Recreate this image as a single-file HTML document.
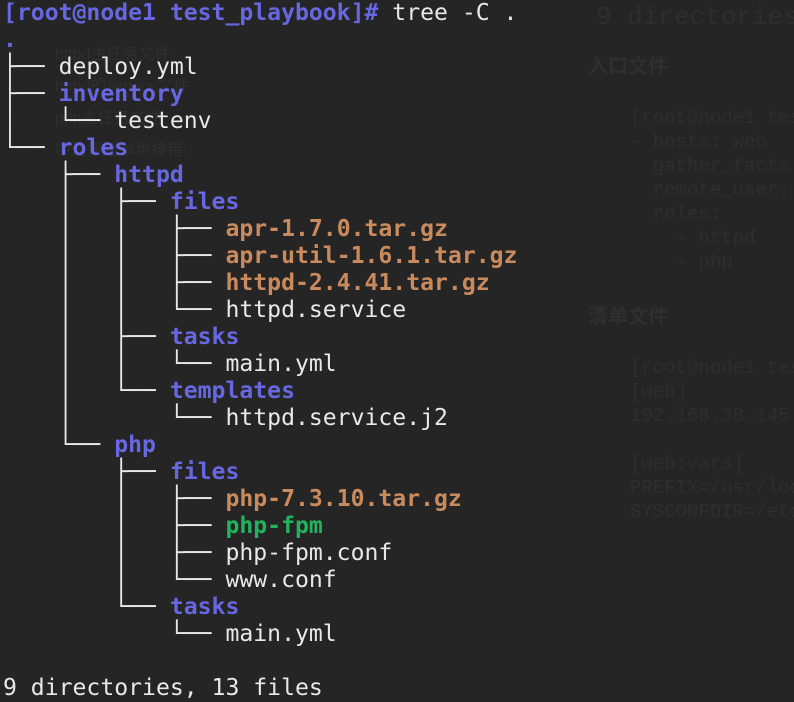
<!DOCTYPE html>
<html><head><meta charset="utf-8"><style>
html,body{margin:0;padding:0;background:#252525;width:794px;height:701px;overflow:hidden}
pre{position:absolute;left:3px;top:0;margin:0;font-family:"DejaVu Sans Mono","Liberation Mono",monospace;font-size:23.1px;line-height:27px;color:#e8e8e8}
.b{color:#6767e2;font-weight:bold}.o{color:#c98a5d;font-weight:bold}.g{color:#22b35c;font-weight:bold}
.gh{position:absolute;color:#2e2e2e;font-family:"Liberation Mono",monospace;font-size:19px;line-height:24px;white-space:pre}
.gc{position:absolute;color:#2f2f2f;font-family:"Liberation Sans","Noto Sans CJK SC",sans-serif;font-size:16px}
</style></head><body>
<div class="gh" style="left:596px;top:2px;font-size:26px;line-height:30px">9 directories</div>
<div class="gc" style="left:588px;top:50px;font-weight:bold;font-size:20px">入口文件</div>
<div class="gh" style="left:630px;top:106px">[root@node1 test_
- hosts: web
  gather_facts: t
  remote_user: ro
  roles:
    - httpd
    - php</div>
<div class="gc" style="left:588px;top:300px;font-weight:bold;font-size:20px">清单文件</div>
<div class="gh" style="left:630px;top:356px">[root@node1 test_
[web]
192.168.38.145

[web:vars]
PREFIX=/usr/local
SYSCONFDIR=/etc/h</div>
<div class="gc" style="left:55px;top:40px">httpd主任务文件</div>
<div class="gc" style="left:55px;top:72px">httpd的service文件</div>
<div class="gc" style="left:55px;top:104px">php主任务文件</div>
<div class="gc" style="left:55px;top:136px">中途报错单步排错:</div>
<pre><span class="b">[root@node1 test_playbook]#</span> tree -C .
<span class="b">.</span>
├── deploy.yml
├── <span class="b">inventory</span>
│   └── testenv
└── <span class="b">roles</span>
    ├── <span class="b">httpd</span>
    │   ├── <span class="b">files</span>
    │   │   ├── <span class="o">apr-1.7.0.tar.gz</span>
    │   │   ├── <span class="o">apr-util-1.6.1.tar.gz</span>
    │   │   ├── <span class="o">httpd-2.4.41.tar.gz</span>
    │   │   └── httpd.service
    │   ├── <span class="b">tasks</span>
    │   │   └── main.yml
    │   └── <span class="b">templates</span>
    │       └── httpd.service.j2
    └── <span class="b">php</span>
        ├── <span class="b">files</span>
        │   ├── <span class="o">php-7.3.10.tar.gz</span>
        │   ├── <span class="g">php-fpm</span>
        │   ├── php-fpm.conf
        │   └── www.conf
        └── <span class="b">tasks</span>
            └── main.yml

9 directories, 13 files</pre>
</body></html>
